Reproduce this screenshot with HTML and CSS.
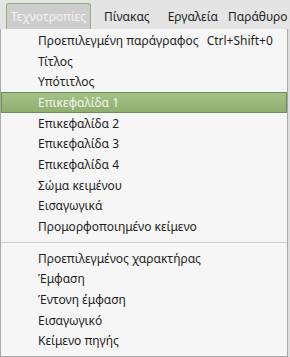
FILE: index.html
```html
<!DOCTYPE html>
<html lang="el">
<head>
    <meta charset="UTF-8">
    <title>Τεχνοτροπίες</title>
    <link rel="stylesheet" href="styles.css">
</head>
<body>
    <nav class="menubar">
        <span class="menu-title active">Τεχνοτροπίες</span>
        <span class="menu-title">Πίνακας</span>
        <span class="menu-title tight">Εργαλεία</span>
        <span class="menu-title">Παράθυρο</span>
    </nav>
    <ul class="dropdown">
        <li class="item">Προεπιλεγμένη παράγραφος<span class="shortcut">Ctrl+Shift+0</span></li>
        <li class="item">Τίτλος</li>
        <li class="item">Υπότιτλος</li>
        <li class="item selected">Επικεφαλίδα 1</li>
        <li class="item">Επικεφαλίδα 2</li>
        <li class="item">Επικεφαλίδα 3</li>
        <li class="item">Επικεφαλίδα 4</li>
        <li class="item">Σώμα κειμένου</li>
        <li class="item">Εισαγωγικά</li>
        <li class="item">Προμορφοποιημένο κείμενο</li>
        <li class="separator"></li>
        <li class="item">Προεπιλεγμένος χαρακτήρας</li>
        <li class="item">Έμφαση</li>
        <li class="item">Έντονη έμφαση</li>
        <li class="item">Εισαγωγικό</li>
        <li class="item">Κείμενο πηγής</li>
    </ul>
</body>
</html>
```

FILE: styles.css
```css
body {
    margin: 0;
    width: 290px;
    height: 357px;
    overflow: hidden;
    font-family: "Noto Sans", sans-serif;
    font-size: 12px;
    color: #1e1e1e;
    background-color: #dcdcdc;
}

.menubar {
    display: flex;
    height: 29px;
    padding: 3px 0 0 6px;
    box-sizing: border-box;
    background-color: #e4e4e4;
}

.menu-title {
    padding: 4px 4px 0 4px;
    margin-right: 8px;
    line-height: 18px;
    border: 1px solid transparent;
    border-bottom: none;
    border-radius: 3px 3px 0 0;
    white-space: nowrap;
}

.menu-title.tight {
    margin-right: 0;
}

.menu-title.active {
    color: #f4f4f4;
    background-color: #cdcdcd;
    border-color: #8fb06e;
}

.dropdown {
    list-style: none;
    margin: 0;
    padding: 1px 0 3px 0;
    width: 288px;
    box-sizing: border-box;
    background-color: #f6f6f6;
    border: 1px solid #a9a9a9;
    border-top: none;
    height: 328px;
}

.item {
    display: flex;
    align-items: center;
    height: 20.7px;
    padding-left: 37px;
    box-sizing: border-box;
    white-space: nowrap;
}

.shortcut {
    margin-left: 8px;
}

.item.selected {
    color: #f2f5ee;
    background: linear-gradient(#a4c287, #8fae6f);
    border: 1px solid #6f8d55;
    padding-left: 36px;
}

.separator {
    height: 1px;
    margin: 5px 0 5px 0;
    background-color: #cdcdcd;
}
```
